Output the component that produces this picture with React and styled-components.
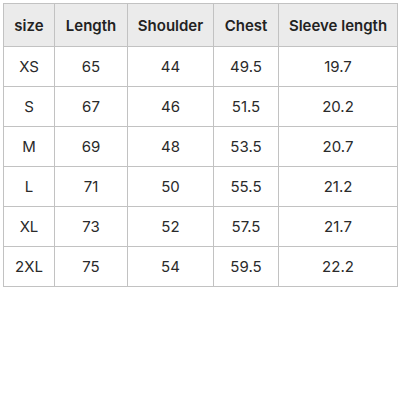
import React from 'react'
import styled, { createGlobalStyle } from 'styled-components'

const GlobalStyle = createGlobalStyle`
    body {
        margin: 0;
        background: #fff;
        font-family: Inter, 'Liberation Sans', sans-serif;
    }
`

const Wrapper = styled.div`
    padding: 3px;
`

const Table = styled.table`
    border-collapse: collapse;
    table-layout: fixed;
    width: 394px;
    color: #222;
    font-size: 15px;
`

const Col = styled.col`
    width: ${(props) => props.w}px;
`

const HeadCell = styled.th`
    background: #ebebeb;
    font-weight: 600;
    height: 42px;
    padding: 0;
    border: 1px solid #c2c2c2;
    text-align: center;
    white-space: nowrap;
`

const Cell = styled.td`
    height: 39px;
    padding: 0;
    border: 1px solid #c2c2c2;
    text-align: center;
    color: #2a2a2a;
`

const columns = [
    ['size', 51],
    ['Length', 73],
    ['Shoulder', 86],
    ['Chest', 65],
    ['Sleeve length', 119],
]

const rows = [
    ['XS', '65', '44', '49.5', '19.7'],
    ['S', '67', '46', '51.5', '20.2'],
    ['M', '69', '48', '53.5', '20.7'],
    ['L', '71', '50', '55.5', '21.2'],
    ['XL', '73', '52', '57.5', '21.7'],
    ['2XL', '75', '54', '59.5', '22.2'],
]

const App = () => (
    <Wrapper>
        <GlobalStyle />
        <Table>
            <colgroup>
                {columns.map(([label, w]) => (
                    <Col key={label} w={w} />
                ))}
            </colgroup>
            <thead>
                <tr>
                    {columns.map(([label]) => (
                        <HeadCell key={label}>{label}</HeadCell>
                    ))}
                </tr>
            </thead>
            <tbody>
                {rows.map((row) => (
                    <tr key={row[0]}>
                        {row.map((value, i) => (
                            <Cell key={i}>{value}</Cell>
                        ))}
                    </tr>
                ))}
            </tbody>
        </Table>
    </Wrapper>
)

export default App
